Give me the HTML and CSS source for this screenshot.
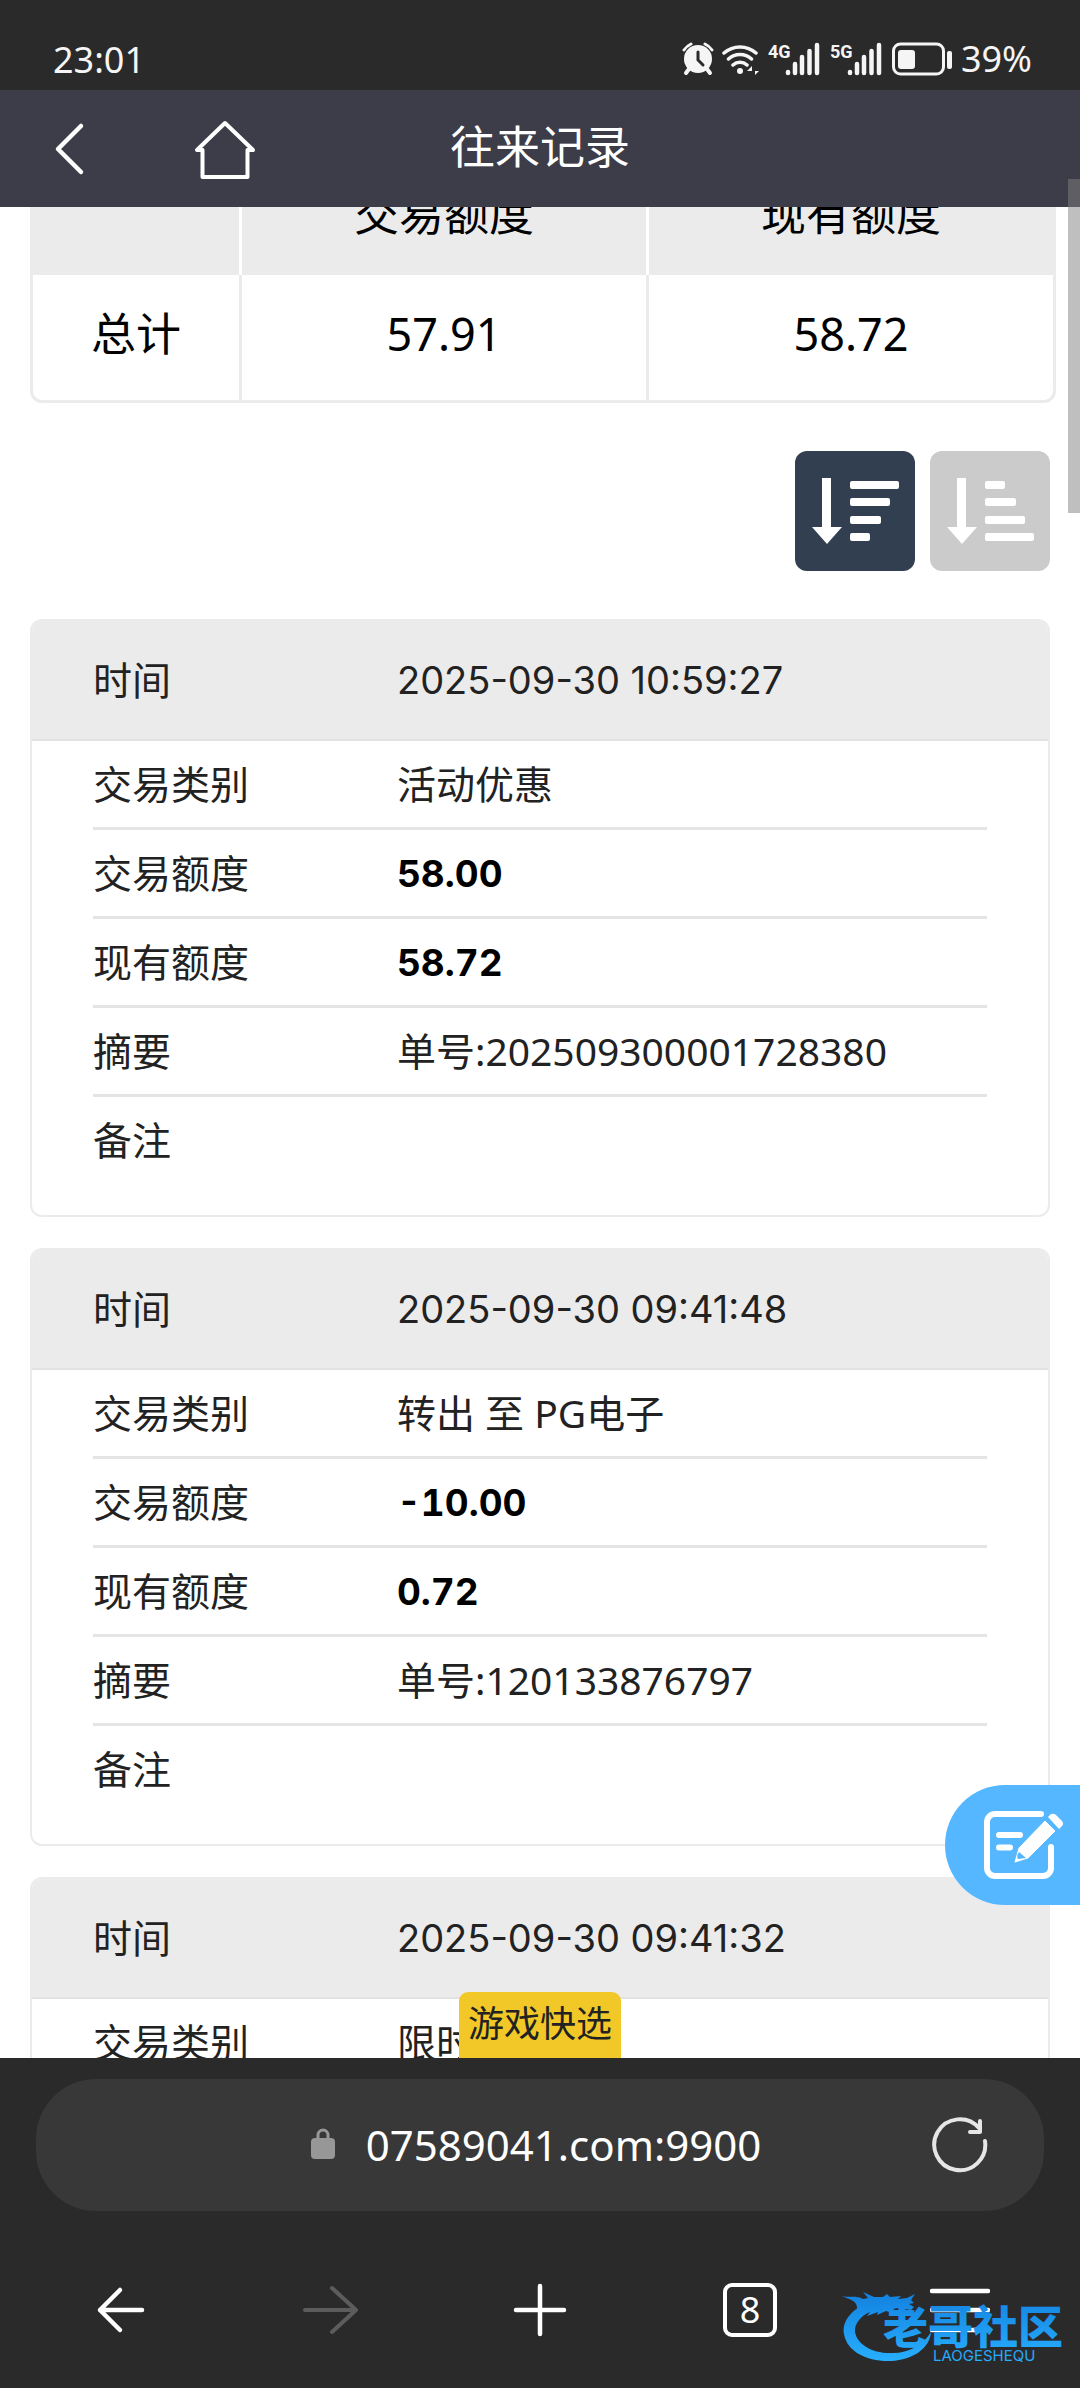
FILE: index.html
```html
<!DOCTYPE html>
<html lang="zh-CN">
<head>
  <meta charset="UTF-8" />
  <meta name="viewport" content="width=device-width, initial-scale=1.0"/>
  <title>往来记录</title>
  <link rel="stylesheet" href="styles.css">
</head>
<body>
  <div class="statusbar">
    <span class="clock">23:01</span>
    <div class="status-icons">
      <svg width="32" height="34" viewBox="0 0 32 34">
        <path d="M2 8a17 17 0 0 1 7-6M30 8a17 17 0 0 0-7-6" stroke="#f5f5f5" stroke-width="3" stroke-linecap="round" fill="none"/>
        <path d="M7 27l-3 4M25 27l3 4" stroke="#f5f5f5" stroke-width="4" stroke-linecap="round"/>
        <circle cx="16" cy="17" r="14" fill="#f5f5f5"/>
        <path d="M16 10v8l5 5" stroke="#2a2a2a" stroke-width="3" stroke-linecap="round" fill="none"/>
      </svg>
      <svg width="38" height="34" viewBox="0 0 38 34">
        <path d="M2 11a24 24 0 0 1 32 0M6.500 17a17 17 0 0 1 23 0M11 23a10.500 10.500 0 0 1 14 0" stroke="#f5f5f5" stroke-width="3.500" stroke-linecap="round" fill="none"/>
        <circle cx="18" cy="29" r="3" fill="#f5f5f5"/>
        <path d="M30 32v-8l-5 5h5zM33 25v8l4-4h-4z" fill="#f5f5f5"/>
      </svg>
      <svg class="signal" width="54" height="34" viewBox="0 0 54 34">
        <text x="0" y="16">4G</text>
        <path d="M20 30v1M27 22v9M34 15v16M41.500 9v22M49 3v28" stroke="#f5f5f5" stroke-width="4.500" stroke-linecap="round"/>
      </svg>
      <svg class="signal" width="54" height="34" viewBox="0 0 54 34">
        <text x="0" y="16">5G</text>
        <path d="M20 30v1M27 22v9M34 15v16M41.500 9v22M49 3v28" stroke="#f5f5f5" stroke-width="4.500" stroke-linecap="round"/>
      </svg>
      <svg width="61" height="34" viewBox="0 0 61 34">
        <rect x="1.500" y="2" width="50" height="30" rx="7" stroke="#f5f5f5" stroke-width="3" fill="none"/>
        <rect x="6" y="8" width="17" height="19" rx="3" fill="#f5f5f5"/>
        <rect x="55" y="9" width="5" height="18" rx="2" fill="#f5f5f5"/>
      </svg>
      <span>39%</span>
    </div>
  </div>

  <header class="topbar">
    <div class="topbar-left">
      <button class="icon-btn" aria-label="返回">
        <svg width="32" height="54" viewBox="0 0 32 54"><path d="M27 4L4 27l23 23" stroke="#fff" stroke-width="4.500" stroke-linecap="round" stroke-linejoin="round" fill="none"/></svg>
      </button>
      <a class="icon-btn" href="#" aria-label="首页">
        <svg width="62" height="60" viewBox="0 0 62 60"><path d="M8.500 31H3L31 4l28 27h-5.500v27h-45z" stroke="#fff" stroke-width="4" stroke-linejoin="round" fill="none"/></svg>
      </a>
    </div>
    <h1>往来记录</h1>
  </header>

  <div class="viewport">
    <main class="content">
      <table class="summary">
        <thead>
          <tr><th></th><th>交易额度</th><th>现有额度</th></tr>
        </thead>
        <tbody>
          <tr><td>总计</td><td>57.91</td><td>58.72</td></tr>
        </tbody>
      </table>

      <div class="sort">
        <button class="sort-btn active" aria-label="降序">
          <svg width="120" height="120" viewBox="0 0 120 120" fill="#fff">
            <path d="M27 27h9v49h11L32 93 17 76h10z"/>
            <rect x="55" y="30" width="49" height="8" rx="2"/><rect x="55" y="47" width="40" height="8" rx="2"/><rect x="55" y="65" width="31" height="8" rx="2"/><rect x="55" y="82" width="20" height="8" rx="2"/>
          </svg>
        </button>
        <button class="sort-btn" aria-label="升序">
          <svg width="120" height="120" viewBox="0 0 120 120" fill="#fff">
            <path d="M27 27h9v49h11L32 93 17 76h10z"/>
            <rect x="55" y="30" width="20" height="8" rx="2"/><rect x="55" y="47" width="31" height="8" rx="2"/><rect x="55" y="65" width="40" height="8" rx="2"/><rect x="55" y="82" width="49" height="8" rx="2"/>
          </svg>
        </button>
      </div>

      <dl class="record">
        <div class="record-head"><dt>时间</dt><dd class="num">2025-09-30 10:59:27</dd></div>
        <div class="row"><dt>交易类别</dt><dd>活动优惠</dd></div>
        <div class="row"><dt>交易额度</dt><dd class="amount">58.00</dd></div>
        <div class="row"><dt>现有额度</dt><dd class="amount">58.72</dd></div>
        <div class="row"><dt>摘要</dt><dd>单号:202509300001728380</dd></div>
        <div class="row"><dt>备注</dt><dd></dd></div>
      </dl>

      <dl class="record">
        <div class="record-head"><dt>时间</dt><dd class="num">2025-09-30 09:41:48</dd></div>
        <div class="row"><dt>交易类别</dt><dd>转出 至 PG电子</dd></div>
        <div class="row"><dt>交易额度</dt><dd class="amount">-10.00</dd></div>
        <div class="row"><dt>现有额度</dt><dd class="amount">0.72</dd></div>
        <div class="row"><dt>摘要</dt><dd>单号:120133876797</dd></div>
        <div class="row"><dt>备注</dt><dd></dd></div>
      </dl>

      <dl class="record">
        <div class="record-head"><dt>时间</dt><dd class="num">2025-09-30 09:41:32</dd></div>
        <div class="row"><dt>交易类别</dt><dd>限时</dd></div>
      </dl>
    </main>

    <button class="feedback" aria-label="反馈">
      <svg width="82" height="70" viewBox="0 0 82 70">
        <path d="M58 4H12a8 8 0 0 0-8 8v46a8 8 0 0 0 8 8h48a8 8 0 0 0 8-8V37M16 25h21M16 37.500h11" stroke="#fff" stroke-width="6" stroke-linecap="round" fill="none"/>
        <path d="M62 10l11 11-28 28-13 4q-1 0-1-1l4-14z" fill="#fff" stroke="#54b7ff" stroke-width="1"/>
        <path d="M65 7l3-3q3-1 5 1l6 6q2 3 0 5l-3 3z" fill="#fff"/>
        <path d="M36 42l7 6-8 1q-2-3 1-7z" fill="#54b7ff"/>
      </svg>
    </button>
    <button class="quick">游戏快选</button>
  </div>
  <div class="scrollbar"></div>

  <footer class="browser">
    <div class="address">
      <div class="url">
        <svg width="24" height="32" viewBox="0 0 24 32"><rect y="10" width="24" height="21" rx="4" fill="#979797"/><path d="M7 11V7a5 5 0 0 1 10 0v4" stroke="#979797" stroke-width="3" fill="none"/></svg>
        <span>07589041.com:9900</span>
      </div>
      <button class="icon-btn reload" aria-label="刷新">
        <svg width="60" height="60" viewBox="0 0 60 60"><path d="M55 26A25.500 25.500 0 1 1 49 13M50 6v11H40" stroke="#e6e6e6" stroke-width="4" stroke-linecap="round" stroke-linejoin="round" fill="none"/></svg>
      </button>
    </div>
    <nav class="tools">
      <button class="icon-btn" aria-label="后退">
        <svg width="60" height="60" viewBox="0 0 60 60"><path d="M52 30H10M30 10L10 30l20 20" stroke="#fff" stroke-width="4.500" stroke-linecap="round" stroke-linejoin="round" fill="none"/></svg>
      </button>
      <button class="icon-btn" aria-label="前进">
        <svg width="60" height="60" viewBox="0 0 60 60"><path d="M5 30h50M32 8l24 22-24 22" stroke="#5c5c5c" stroke-width="4" stroke-linecap="round" stroke-linejoin="round" fill="none"/></svg>
      </button>
      <button class="icon-btn" aria-label="新标签页">
        <svg width="60" height="60" viewBox="0 0 60 60"><path d="M6 30h48M30 6v48" stroke="#fff" stroke-width="4.500" stroke-linecap="round"/></svg>
      </button>
      <button class="icon-btn" aria-label="标签页"><span class="tabs">8</span></button>
      <button class="icon-btn" aria-label="菜单">
        <svg width="60" height="60" viewBox="0 0 60 60"><path d="M2 11h56M2 30h56M2 50h56" stroke="#fff" stroke-width="4.500" stroke-linecap="round"/></svg>
      </button>
    </nav>
    <svg class="watermark" width="240" height="84" viewBox="0 0 240 84">
      <defs>
        <linearGradient id="blue" gradientUnits="userSpaceOnUse" x1="0" y1="10" x2="0" y2="78">
          <stop offset="0" stop-color="#1483e0"/><stop offset="1" stop-color="#28b0ff"/>
        </linearGradient>
      </defs>
      <g fill="url(#blue)">
        <path d="M28 18C10 25 2 37 4 49c3 18 24 28 47 27 22-1 39-13 40-29-8 13-22 21-38 21C32 69 17 59 15 47c-1-9 7-18 20-22z"/>
        <path d="M2 11c9 2 14-1 21 3l5-1-5-6 11 5 9 0 4-3 3 3 11-1-3 3 9-1 8-4-4 6 3 3-5 1 5 3-3 3-13-2-5 1 7 4-5 1-9-3-9 4 1-3-11 4 3-4-9 1 6-4-10 1C18 15 10 15 2 11z"/>
        <text class="mark-name" x="43" y="59">老哥社区</text>
        <text class="mark-sub" x="93" y="76">LAOGESHEQU</text>
      </g>
    </svg>
  </footer>
</body>
</html>
```
FILE: styles.css
```css
* { box-sizing: border-box; margin: 0; padding: 0; }
body { height: 100vh; display: flex; flex-direction: column; position: relative; overflow: hidden; background: #fff; color: #222; font-family: "Noto Sans", "Noto Sans CJK SC", sans-serif; font-size: 39px; }
button { border: none; background: none; font: inherit; color: inherit; }
svg { display: block; }

.statusbar { flex: none; height: 90px; padding: 28px 48px 0 53px; display: flex; justify-content: space-between; background: #2a2a2a; color: #f5f5f5; font-size: 36px; line-height: 64px; }
.status-icons { display: flex; align-items: center; gap: 8px; }
.signal text { font-family: Roboto, sans-serif; font-size: 18px; font-weight: bold; fill: #f5f5f5; }

.topbar { flex: none; height: 117px; position: relative; display: flex; align-items: center; justify-content: center; background: #3d3c49; color: #fff; }
.topbar h1 { padding-bottom: 4px; font-size: 45px; font-weight: normal; line-height: 60px; }
.topbar-left { position: absolute; left: 54px; display: flex; align-items: center; gap: 108px; }
.icon-btn { display: flex; align-items: center; justify-content: center; }

.viewport { flex: 1; min-height: 0; position: relative; overflow: hidden; }
/* the list is scrolled a little way down */
.content { margin-top: -52px; padding: 0 30px; }

.summary { width: calc(100% + 6px); border: 3px solid #ebebeb; border-radius: 12px; border-spacing: 0; table-layout: fixed; color: #000; font-size: 45px; line-height: 60px; text-align: center; }
.summary th { padding: 26px 0 31px; background: #ebebeb; font-weight: normal; }
.summary td { padding: 29px 0 36px; }
.summary th:first-child { width: 206px; }
.summary th + th { border-left: 3px solid #fff; }
.summary td + td { border-left: 3px solid #ebebeb; }

.sort { display: flex; justify-content: flex-end; gap: 15px; margin: 48px 0; }
.sort-btn { width: 120px; height: 120px; border-radius: 12px; background: #cbcbcb; }
.sort-btn.active { background: #313f51; }

.record { margin-bottom: 31px; padding-bottom: 29px; border: 2px solid #ebebeb; border-radius: 12px; }
.record dt { flex: none; width: 34%; }
.record dt, .record dd { padding-bottom: 4px; }
.record-head { height: 120px; padding: 0 61px; display: flex; align-items: center; background: #ebebeb; border-bottom: 2px solid #e2e2e2; border-radius: 10px 10px 0 0; }
.row { height: 89px; margin: 0 61px; display: flex; align-items: center; border-bottom: 3px solid #e4e4e4; }
.row:last-child { border-bottom-color: transparent; }
.record .num, .record .amount { padding-bottom: 0; font-family: Inter, sans-serif; font-size: 38px; }
.record .amount { font-size: 37px; font-weight: bold; font-variant-numeric: tabular-nums; color: #000; }

.feedback { position: absolute; right: 0; bottom: 153px; width: 135px; height: 120px; padding-left: 38px; display: flex; align-items: center; border-radius: 60px 0 0 60px; background: #54b7ff; }
.quick { position: absolute; left: 50%; bottom: 0; transform: translateX(-50%); padding: 8px 9px 10px; border-radius: 9px 9px 0 0; background: #f1c827; color: #222; font-size: 36px; line-height: 48px; }
.scrollbar { position: absolute; top: 179px; right: 0; width: 12px; height: 334px; background: rgba(128,128,128,0.5); }

.browser { flex: none; position: relative; padding-top: 21px; background: #2a2a2a; color: #fff; }
.address { height: 132px; margin: 0 36px; padding-right: 8px; display: flex; align-items: center; justify-content: center; position: relative; border-radius: 60px; background: #383838; font-size: 42px; }
.url { display: flex; align-items: center; gap: 31px; padding-bottom: 2px; }
.reload { position: absolute; right: 54px; }
.tools { display: grid; grid-template-columns: repeat(5, 1fr); height: 177px; padding: 21px 15px 0; }
.tabs { width: 54px; height: 54px; border: 4px solid #fff; border-radius: 9px; font-size: 36px; line-height: 45px; text-align: center; }
.watermark { position: absolute; right: 0; bottom: 19px; }
.mark-name { font-family: "Noto Sans CJK SC", sans-serif; font-size: 45px; font-weight: 900; }
.mark-sub { font-family: Inter, sans-serif; font-size: 15px; }
```
